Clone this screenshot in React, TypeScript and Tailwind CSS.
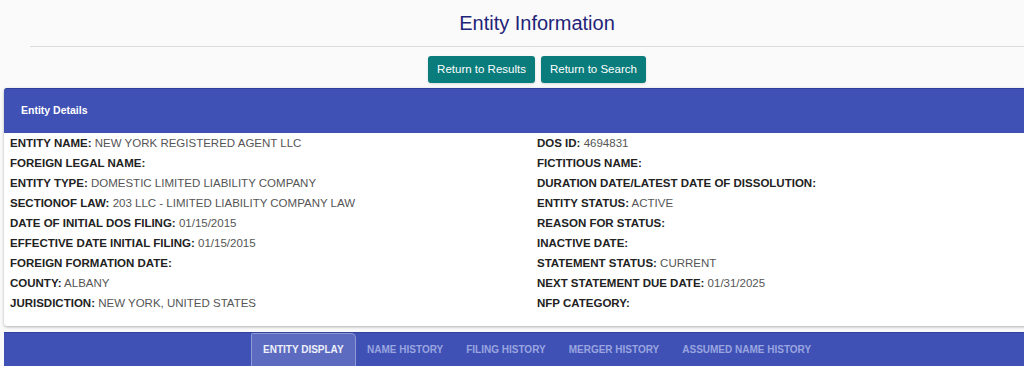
import React from "react";

const left: [string, string][] = [
  ["ENTITY NAME:", "NEW YORK REGISTERED AGENT LLC"],
  ["FOREIGN LEGAL NAME:", ""],
  ["ENTITY TYPE:", "DOMESTIC LIMITED LIABILITY COMPANY"],
  ["SECTIONOF LAW:", "203 LLC - LIMITED LIABILITY COMPANY LAW"],
  ["DATE OF INITIAL DOS FILING:", "01/15/2015"],
  ["EFFECTIVE DATE INITIAL FILING:", "01/15/2015"],
  ["FOREIGN FORMATION DATE:", ""],
  ["COUNTY:", "ALBANY"],
  ["JURISDICTION:", "NEW YORK, UNITED STATES"],
];

const right: [string, string][] = [
  ["DOS ID:", "4694831"],
  ["FICTITIOUS NAME:", ""],
  ["DURATION DATE/LATEST DATE OF DISSOLUTION:", ""],
  ["ENTITY STATUS:", "ACTIVE"],
  ["REASON FOR STATUS:", ""],
  ["INACTIVE DATE:", ""],
  ["STATEMENT STATUS:", "CURRENT"],
  ["NEXT STATEMENT DUE DATE:", "01/31/2025"],
  ["NFP CATEGORY:", ""],
];

function Row({ label, value }: { label: string; value: string }) {
  return (
    <div className="h-[20px] leading-[20px] text-[11.5px] whitespace-nowrap">
      <span className="font-bold text-[#222]">{label}</span>
      {value && <span className="text-[#555]"> {value}</span>}
    </div>
  );
}

export default function App() {
  const tabs = ["NAME HISTORY", "FILING HISTORY", "MERGER HISTORY", "ASSUMED NAME HISTORY"];
  return (
    <div
      className="w-[1024px] h-[366px] overflow-hidden bg-[#fafafa]"
      style={{ fontFamily: '"Liberation Sans", Arial, sans-serif' }}
    >
      <div className="ml-[30px] w-[1014px]">
        <h1 className="text-center text-[20px] leading-[24px] pt-[11px] text-[#1f2478]">
          Entity Information
        </h1>
        <div className="mt-[11px] h-[1px] bg-[#dcdcdc]" />
        <div className="flex justify-center gap-[6px] mt-[9px]">
          <button className="h-[27px] px-[9px] rounded-[3px] bg-[#0a7c7c] text-white text-[11.5px] shadow-sm">
            Return to Results
          </button>
          <button className="h-[27px] px-[9px] rounded-[3px] bg-[#0a7c7c] text-white text-[11.5px] shadow-sm">
            Return to Search
          </button>
        </div>
      </div>

      <div className="ml-[4px] w-[1066px] mt-[5px] bg-white rounded-[3px] shadow-[0_1px_3px_rgba(0,0,0,0.3)]">
        <div className="h-[45px] bg-[#3f51b5] rounded-t-[3px] flex items-center pl-[17px] border-t border-[#2f3f9a]">
          <span className="text-white font-bold text-[10.5px]">Entity Details</span>
        </div>
        <div className="grid grid-cols-[527px_1fr] px-[6px] pb-[13px]">
          <div>
            {left.map(([l, v]) => (
              <Row key={l} label={l} value={v} />
            ))}
          </div>
          <div>
            {right.map(([l, v]) => (
              <Row key={l} label={l} value={v} />
            ))}
          </div>
        </div>
      </div>

      <div className="ml-[4px] mt-[6px] w-[1066px] h-[40px] bg-[#3f51b5] border-t border-[#32439e] flex">
        <div className="ml-[247px] flex items-start">
          <div className="px-[11px] h-[33px] bg-[#5c6bc0] border border-b-0 border-[#8e99d6] rounded-tr-[5px] rounded-tl-[2px] flex items-center">
            <span className="text-[10px] leading-none font-bold text-[#eef0fa]">ENTITY DISPLAY</span>
          </div>
          {tabs.map((t) => (
            <div key={t} className="px-[11.5px] h-[33px] flex items-center">
              <span className="text-[10px] leading-none font-bold text-[#9aa5e0]">{t}</span>
            </div>
          ))}
        </div>
      </div>
    </div>
  );
}
